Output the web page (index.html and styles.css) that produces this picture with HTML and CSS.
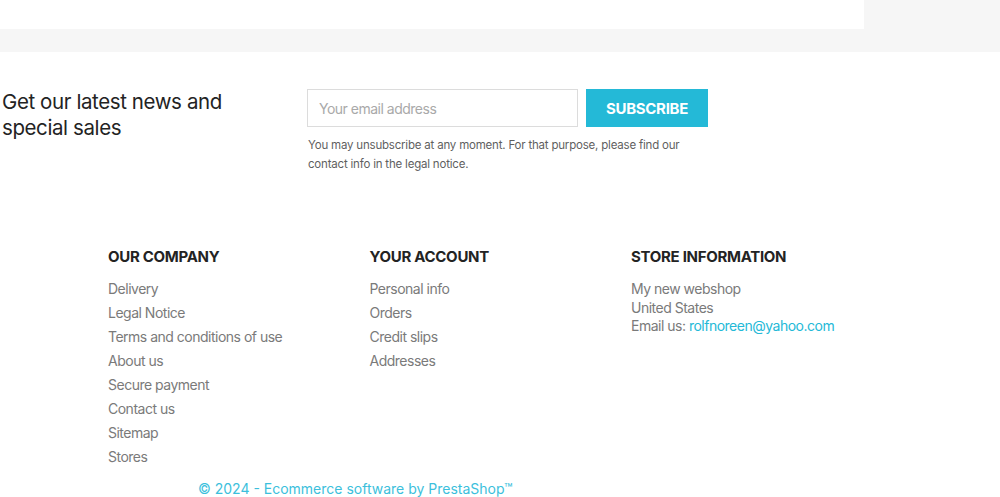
FILE: index.html
```html
<!DOCTYPE html>
<html lang="en">
<head>
<meta charset="utf-8">
<link rel="stylesheet" href="styles.css">
</head>
<body>
<div class="top">
  <div class="top-card"></div>
</div>
<section class="newsletter">
  <h2 class="nl-title">Get our latest news and special sales</h2>
  <div class="nl-form">
    <div class="nl-row">
      <input class="nl-input" type="text" placeholder="Your email address">
      <button class="nl-btn">SUBSCRIBE</button>
    </div>
    <p class="nl-note">You may unsubscribe at any moment. For that purpose, please find our contact info in the legal notice.</p>
  </div>
</section>
<footer class="footer">
  <div class="cols">
    <div class="col">
      <h3 class="col-title">OUR COMPANY</h3>
      <ul class="links">
        <li>Delivery</li>
        <li>Legal Notice</li>
        <li>Terms and conditions of use</li>
        <li>About us</li>
        <li>Secure payment</li>
        <li>Contact us</li>
        <li>Sitemap</li>
        <li>Stores</li>
      </ul>
    </div>
    <div class="col">
      <h3 class="col-title">YOUR ACCOUNT</h3>
      <ul class="links">
        <li>Personal info</li>
        <li>Orders</li>
        <li>Credit slips</li>
        <li>Addresses</li>
      </ul>
    </div>
    <div class="col">
      <h3 class="col-title">STORE INFORMATION</h3>
      <div class="store">
        <div>My new webshop</div>
        <div>United States</div>
        <div>Email us: <a class="mail" href="#">rolfnoreen@yahoo.com</a></div>
      </div>
    </div>
  </div>
  <div class="copy">© 2024 - Ecommerce software by PrestaShop™</div>
</footer>
</body>
</html>
```
FILE: styles.css
```css
* { box-sizing: border-box; }
html, body { margin: 0; padding: 0; }
body {
  font-family: Inter, "Open Sans", "Liberation Sans", sans-serif;
  background: #fff;
  color: #7a7a7a;
  width: 1000px;
  overflow: hidden;
}
.top {
  background: #f6f6f6;
  height: 52px;
}
.top-card {
  width: 864px;
  height: 29px;
  background: #fff;
}
.newsletter {
  display: flex;
  padding: 37px 0 0 2px;
  height: 195px;
}
.nl-title {
  margin: 0;
  width: 305px;
  font-size: 20.5px;
  line-height: 26px;
  font-weight: 400;
  color: #232323;
  letter-spacing: -0.4px;
  padding-right: 60px;
}
.nl-row {
  display: flex;
  gap: 8px;
}
.nl-input {
  width: 271px;
  height: 38px;
  border: 1px solid #dcdcdc;
  padding: 0 11px;
  font-family: inherit;
  font-size: 14px;
  color: #232323;
  outline: none;
  letter-spacing: -0.5px;
}
.nl-input::placeholder { color: #a9a9a9; }
.nl-btn {
  width: 122px;
  height: 38px;
  border: none;
  background: #24b9d7;
  color: #fff;
  font-family: inherit;
  font-weight: 700;
  font-size: 15px;
  letter-spacing: -0.3px;
  padding: 0;
}
.nl-note {
  margin: 9px 0 0 1px;
  width: 390px;
  font-size: 11.5px;
  line-height: 19px;
  color: #5f5f5f;
  letter-spacing: -0.2px;
}
.footer { padding: 0 0 0 108px; }
.cols { display: flex; }
.col { width: 261.5px; }
.col-title {
  margin: 0 0 10px;
  font-size: 15px;
  line-height: 20px;
  font-weight: 700;
  color: #232323;
  letter-spacing: -0.3px;
}
.links {
  list-style: none;
  margin: 0;
  padding: 0;
}
.links li {
  font-size: 14px;
  line-height: 24px;
  color: #7a7a7a;
  letter-spacing: -0.5px;
}
.store {
  font-size: 14px;
  line-height: 18.5px;
  color: #7a7a7a;
  letter-spacing: -0.5px;
  padding-top: 3px;
}
.mail { color: #24b9d7; text-decoration: none; }
.copy {
  margin: 10px 0 0 90px;
  font-size: 14px;
  line-height: 20px;
  color: #3cbfdc;
  letter-spacing: 0;
}
```
